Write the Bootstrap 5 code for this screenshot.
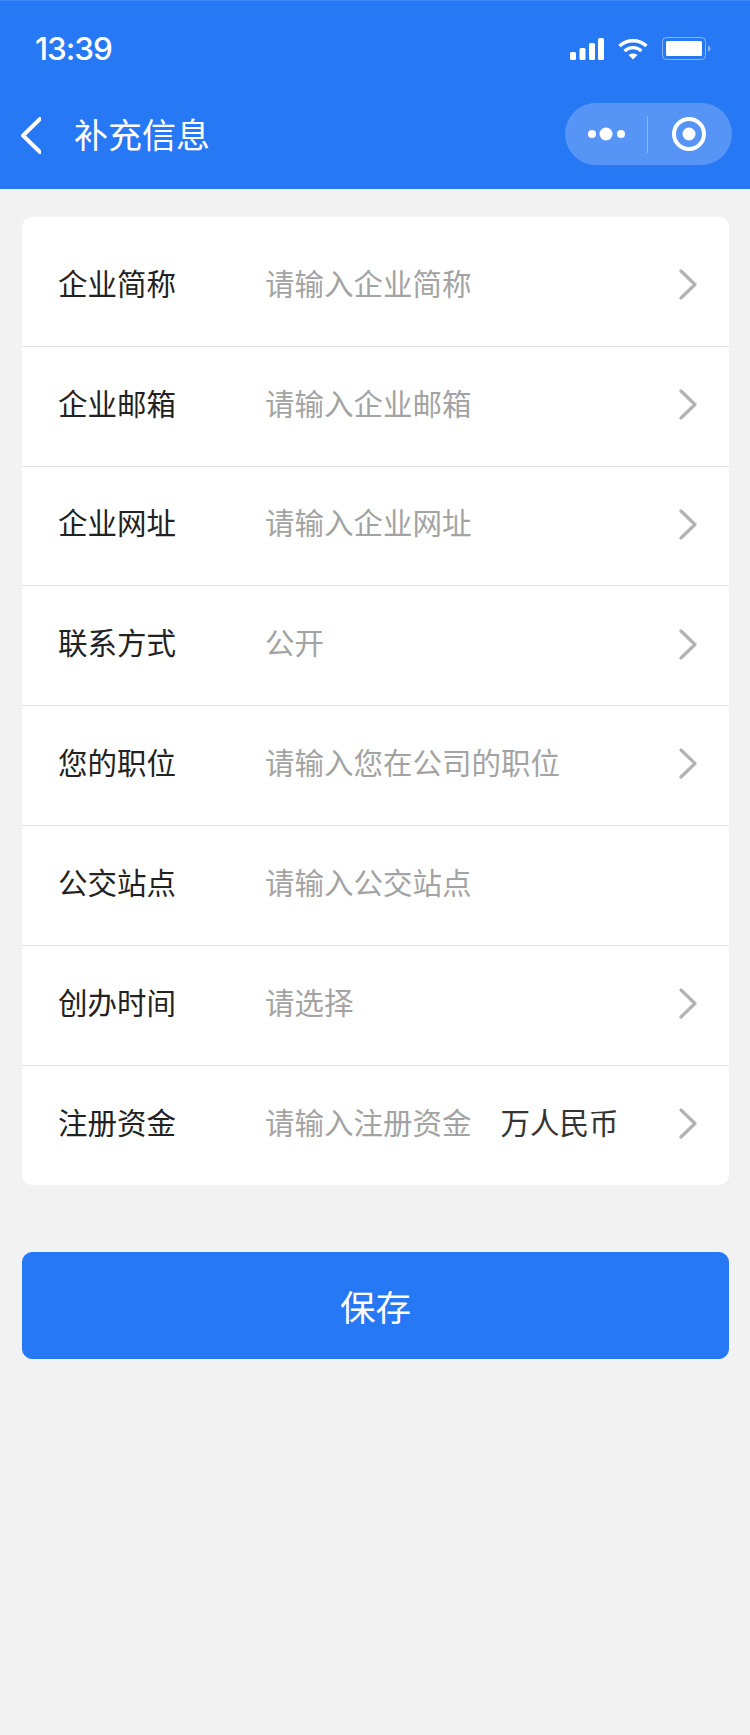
<!DOCTYPE html>
<html lang="zh-CN">
<head>
    <meta charset="UTF-8">
    <title>补充信息</title>
    <link href="https://cdn.jsdelivr.net/npm/bootstrap@5.3.2/dist/css/bootstrap.min.css" rel="stylesheet">
    <style>
        body {
            background: #f2f2f2;
            font-family: "Noto Sans CJK SC", "Liberation Sans", sans-serif;
        }
        .app-head {
            background: #2778f4;
            border-top: 1px solid #3f87f6;
            height: 189px;
            color: #fff;
        }
        .status-row {
            height: 87px;
            padding: 9px 39px 0 35px;
        }
        .status-time {
            font-family: Inter, "Liberation Sans", sans-serif;
            font-size: 31.5px;
            font-weight: 500;
            letter-spacing: -1px;
            line-height: 1;
        }
        .status-icons {
            gap: 14px;
        }
        .title-row {
            height: 100px;
            padding: 0 18px 8px 21px;
        }
        .back-icon {
            margin-top: 2px;
        }
        .head-title {
            font-size: 34px;
            margin-left: 33px;
            line-height: 1;
        }
        .capsule {
            width: 167px;
            height: 62px;
            border-radius: 31px;
            background: rgba(255, 255, 255, .22);
        }
        .form-panel {
            margin: 28px 21px 0 22px;
            padding-top: 10px;
            border-radius: 10px;
            overflow: hidden;
        }
        .form-row {
            height: 119.8px;
            padding: 0 32px 9px 36px;
            border-color: #e4e4e4;
            font-size: 29.5px;
            color: #222;
        }
        .form-label-text {
            width: 207px;
            flex-shrink: 0;
        }
        .form-hint {
            color: #a3a3a3;
        }
        .form-unit {
            margin-left: 29px;
            color: #333;
        }
        .form-arrow {
            margin-left: auto;
            margin-top: 5.6px;
        }
        .save-btn {
            display: block;
            width: 707px;
            height: 107px;
            margin: 67px 0 0 22px;
            border-radius: 10px;
            background: #2778f4;
            border-color: #2778f4;
            font-size: 35.5px;
            color: #fff;
        }
    </style>
</head>
<body>

<header class="app-head">
    <div class="status-row d-flex align-items-center justify-content-between">
        <span class="status-time">13:39</span>
        <div class="status-icons d-flex align-items-center">
            <svg width="34" height="22" viewBox="0 0 34 22" fill="#fff">
                <rect x="0" y="14" width="6" height="8" rx="1.5"/>
                <rect x="9.5" y="10" width="6" height="12" rx="1.5"/>
                <rect x="19" y="5" width="6" height="17" rx="1.5"/>
                <rect x="28" y="0" width="6" height="22" rx="1.5"/>
            </svg>
            <svg width="30" height="22" viewBox="0 0 30 22" fill="none" stroke="#fff" stroke-width="3.4">
                <path d="M1.5 8C9 1 21 1 28.5 8"/>
                <path d="M6.5 13C11.5 8.5 18.5 8.5 23.5 13"/>
                <path d="M15 21.5L10.5 17C13 15 17 15 19.5 17Z" fill="#fff" stroke="none"/>
            </svg>
            <svg width="49" height="24" viewBox="0 0 49 24">
                <rect x="0.5" y="0.5" width="43" height="22" rx="4" fill="none" stroke="#fff" stroke-opacity=".45"/>
                <rect x="4" y="4" width="36" height="15" rx="1.5" fill="#fff"/>
                <path d="M46 8.5c2 .5 2.500 1.500 2.500 3s-.5 2.500-2.500 3z" fill="#fff" fill-opacity=".45"/>
            </svg>
        </div>
    </div>
    <div class="title-row d-flex align-items-center">
        <svg class="back-icon" width="20" height="37" viewBox="0 0 20 37" fill="none" stroke="#fff" stroke-width="4" stroke-linecap="round" stroke-linejoin="round">
            <path d="M19 2L2 18.500L19 35"/>
        </svg>
        <span class="head-title">补充信息</span>
        <div class="capsule d-flex align-items-center ms-auto">
            <svg width="167" height="62" viewBox="0 0 167 62">
                <circle cx="27" cy="31" r="4" fill="#fff"/>
                <circle cx="41" cy="31" r="6.500" fill="#fff"/>
                <circle cx="56" cy="31" r="4" fill="#fff"/>
                <rect x="82" y="13" width="1" height="37" fill="#fff" fill-opacity=".3"/>
                <circle cx="124" cy="31" r="15" fill="none" stroke="#fff" stroke-width="4"/>
                <circle cx="124" cy="31" r="6.500" fill="#fff"/>
            </svg>
        </div>
    </div>
</header>

<form>
    <div class="form-panel list-group list-group-flush bg-white">
        <div class="form-row list-group-item d-flex align-items-center">
            <span class="form-label-text">企业简称</span>
            <span class="form-hint">请输入企业简称</span>
            <svg class="form-arrow" width="18" height="31" viewBox="0 0 18 31" fill="none" stroke="#b3b3b3" stroke-width="3.200" stroke-linecap="round" stroke-linejoin="round"><path d="M2 2L16 15.500L2 29"/></svg>
        </div>
        <div class="form-row list-group-item d-flex align-items-center">
            <span class="form-label-text">企业邮箱</span>
            <span class="form-hint">请输入企业邮箱</span>
            <svg class="form-arrow" width="18" height="31" viewBox="0 0 18 31" fill="none" stroke="#b3b3b3" stroke-width="3.200" stroke-linecap="round" stroke-linejoin="round"><path d="M2 2L16 15.500L2 29"/></svg>
        </div>
        <div class="form-row list-group-item d-flex align-items-center">
            <span class="form-label-text">企业网址</span>
            <span class="form-hint">请输入企业网址</span>
            <svg class="form-arrow" width="18" height="31" viewBox="0 0 18 31" fill="none" stroke="#b3b3b3" stroke-width="3.200" stroke-linecap="round" stroke-linejoin="round"><path d="M2 2L16 15.500L2 29"/></svg>
        </div>
        <div class="form-row list-group-item d-flex align-items-center">
            <span class="form-label-text">联系方式</span>
            <span class="form-hint">公开</span>
            <svg class="form-arrow" width="18" height="31" viewBox="0 0 18 31" fill="none" stroke="#b3b3b3" stroke-width="3.200" stroke-linecap="round" stroke-linejoin="round"><path d="M2 2L16 15.500L2 29"/></svg>
        </div>
        <div class="form-row list-group-item d-flex align-items-center">
            <span class="form-label-text">您的职位</span>
            <span class="form-hint">请输入您在公司的职位</span>
            <svg class="form-arrow" width="18" height="31" viewBox="0 0 18 31" fill="none" stroke="#b3b3b3" stroke-width="3.200" stroke-linecap="round" stroke-linejoin="round"><path d="M2 2L16 15.500L2 29"/></svg>
        </div>
        <div class="form-row list-group-item d-flex align-items-center">
            <span class="form-label-text">公交站点</span>
            <span class="form-hint">请输入公交站点</span>
        </div>
        <div class="form-row list-group-item d-flex align-items-center">
            <span class="form-label-text">创办时间</span>
            <span class="form-hint">请选择</span>
            <svg class="form-arrow" width="18" height="31" viewBox="0 0 18 31" fill="none" stroke="#b3b3b3" stroke-width="3.200" stroke-linecap="round" stroke-linejoin="round"><path d="M2 2L16 15.500L2 29"/></svg>
        </div>
        <div class="form-row list-group-item d-flex align-items-center">
            <span class="form-label-text">注册资金</span>
            <span class="form-hint">请输入注册资金</span>
            <span class="form-unit">万人民币</span>
            <svg class="form-arrow" width="18" height="31" viewBox="0 0 18 31" fill="none" stroke="#b3b3b3" stroke-width="3.200" stroke-linecap="round" stroke-linejoin="round"><path d="M2 2L16 15.500L2 29"/></svg>
        </div>
    </div>
    <button type="button" class="btn save-btn">保存</button>
</form>

<script src="https://cdn.jsdelivr.net/npm/bootstrap@5.3.2/dist/js/bootstrap.bundle.min.js"></script>
</body>
</html>
